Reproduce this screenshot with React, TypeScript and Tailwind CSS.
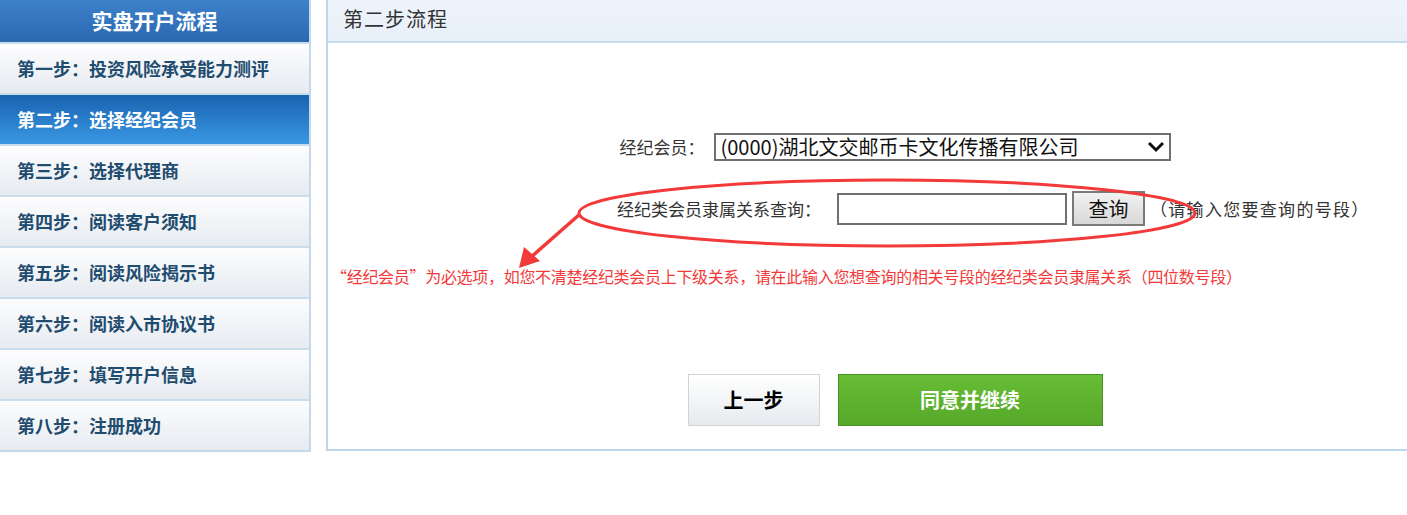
import React from "react";

const steps = [
  "第一步：投资风险承受能力测评",
  "第二步：选择经纪会员",
  "第三步：选择代理商",
  "第四步：阅读客户须知",
  "第五步：阅读风险揭示书",
  "第六步：阅读入市协议书",
  "第七步：填写开户信息",
  "第八步：注册成功",
];

const font = { fontFamily: '"Noto Sans CJK SC", "Noto Sans", sans-serif' };

export default function App() {
  return (
    <div
      className="relative w-[1407px] h-[515px] overflow-hidden bg-white"
      style={font}
    >
      <div className="flex items-start w-[1500px]">
        {/* Sidebar */}
        <div className="w-[311px] shrink-0 border-r-2 border-b-2 border-[#c3d9ec]">
          <div className="h-[42px] flex items-center justify-center text-white font-bold text-[21px] bg-gradient-to-b from-[#3d82cb] to-[#2b68b0]">
            实盘开户流程
          </div>
          {steps.map((s, i) => {
            const active = i === 1;
            return (
              <div
                key={s}
                className={
                  "h-[51px] border-t-2 border-[#c9dcec] flex items-center pl-[17px] text-[18px] font-bold " +
                  (active
                    ? "bg-gradient-to-b from-[#1a63b1] to-[#3a98e2] text-white"
                    : "bg-gradient-to-b from-[#fdfdfe] to-[#e6ebf0] text-[#1f4c6f]")
                }
              >
                {s}
              </div>
            );
          })}
        </div>

        {/* Main panel */}
        <div className="ml-[15px] w-[1136px] h-[451px] border-l-2 border-b-2 border-[#bcd5e9] flex flex-col">
          <div className="h-[43px] shrink-0 border-b-2 border-[#c3dbee] bg-gradient-to-b from-[#eef4fb] to-[#e7eff8] flex items-center pl-[15px] pb-[4px] text-[20px] text-[#333] tracking-[1px]">
            第二步流程
          </div>

          {/* Row 1 */}
          <div className="mt-[90px] flex items-center justify-center text-[#333]">
            <span className="text-[17px] mr-[9px]">经纪会员：</span>
            <div className="w-[457px] h-[28px] border-2 border-[#6f6f6f] flex items-center justify-between pl-[5px] pr-[4px]">
              <span className="text-[20px] text-[#111] leading-none">
                (0000)湖北文交邮币卡文化传播有限公司
              </span>
              <svg width="18" height="12" viewBox="0 0 18 12">
                <path
                  d="M2 2 L9 9 L16 2"
                  fill="none"
                  stroke="#111"
                  strokeWidth="3"
                />
              </svg>
            </div>
          </div>

          {/* Row 2 */}
          <div className="mt-[30px] ml-[289px] flex items-center text-[#333]">
            <span className="text-[17px] mr-[16px]">经纪类会员隶属关系查询：</span>
            <div className="w-[230px] h-[32px] border-2 border-[#707070] bg-white" />
            <div className="ml-[5px] w-[73px] h-[35px] border-2 border-[#7a7a7a] bg-gradient-to-b from-[#f2f2f2] to-[#d8d8d8] flex items-center justify-center text-[20px] text-[#111]">
              查询
            </div>
            <span className="ml-[5px] text-[17px] tracking-[1.3px]">（请输入您要查询的号段）</span>
          </div>

          {/* Red note */}
          <div className="mt-[42px] pl-[3px] text-[16px] text-[#f23a3a] leading-none whitespace-nowrap tracking-[-0.3px]">
            “经纪会员”为必选项，如您不清楚经纪类会员上下级关系，请在此输入您想查询的相关号段的经纪类会员隶属关系（四位数号段）
          </div>

          {/* Buttons */}
          <div className="mt-[90px] flex justify-center gap-[18px]">
            <div className="w-[132px] h-[52px] border border-[#cfd3d6] bg-gradient-to-b from-[#ffffff] to-[#e6eaee] flex items-center justify-center text-[20px] font-bold text-black">
              上一步
            </div>
            <div className="w-[265px] h-[52px] border border-[#4b8e26] bg-gradient-to-b from-[#67bd35] to-[#57a82a] flex items-center justify-center text-[20px] font-bold text-white">
              同意并继续
            </div>
          </div>
        </div>
      </div>

      {/* Annotation overlay */}
      <svg
        className="absolute left-0 top-0 pointer-events-none"
        width="1407"
        height="515"
      >
        <ellipse
          cx="887"
          cy="213"
          rx="308"
          ry="33"
          fill="none"
          stroke="#f23a3a"
          strokeWidth="3"
        />
        <line
          x1="580"
          y1="214"
          x2="530"
          y2="258"
          stroke="#f23a3a"
          strokeWidth="3.5"
        />
        <polygon points="519,268 524,247 540,261" fill="#f23a3a" />
      </svg>
    </div>
  );
}
